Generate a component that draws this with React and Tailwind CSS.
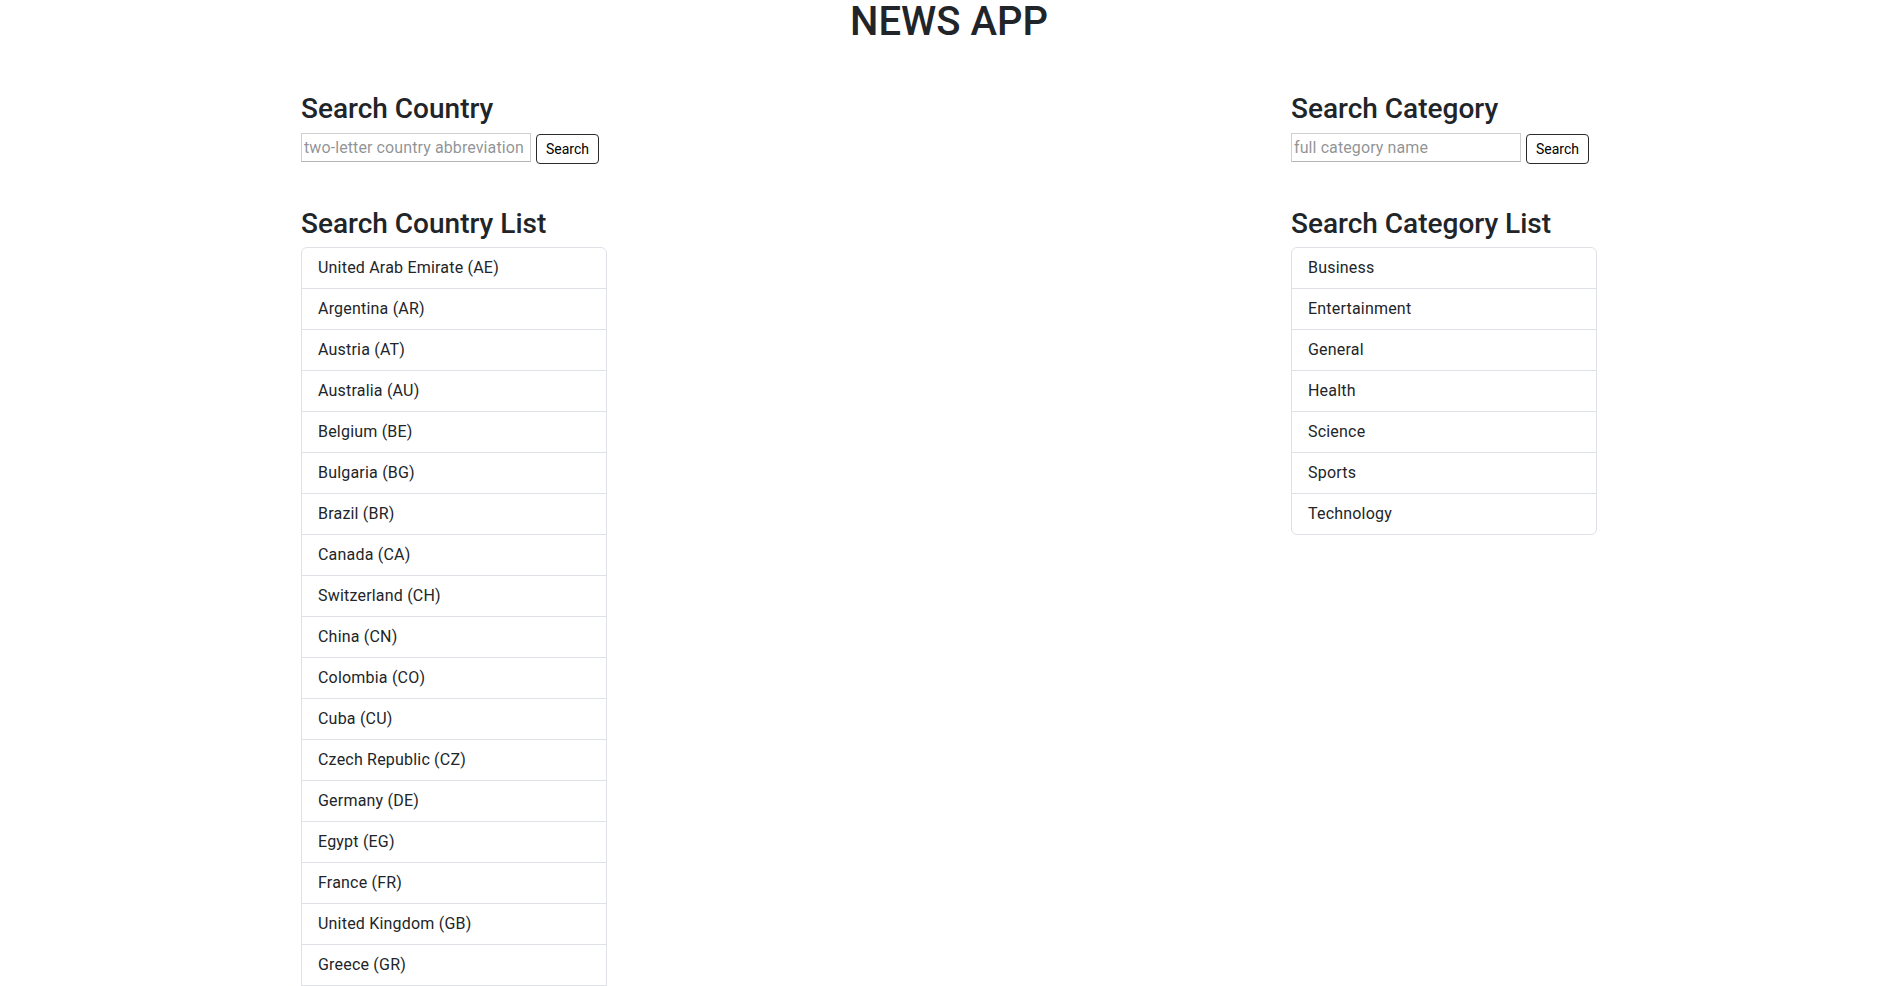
import React from "react";

const countries = [
  ["United Arab Emirate", "AE"],
  ["Argentina", "AR"],
  ["Austria", "AT"],
  ["Australia", "AU"],
  ["Belgium", "BE"],
  ["Bulgaria", "BG"],
  ["Brazil", "BR"],
  ["Canada", "CA"],
  ["Switzerland", "CH"],
  ["China", "CN"],
  ["Colombia", "CO"],
  ["Cuba", "CU"],
  ["Czech Republic", "CZ"],
  ["Germany", "DE"],
  ["Egypt", "EG"],
  ["France", "FR"],
  ["United Kingdom", "GB"],
  ["Greece", "GR"],
  ["Hong Kong", "HK"],
  ["Hungary", "HU"],
  ["Indonesia", "ID"],
  ["Ireland", "IE"],
  ["Israel", "IL"],
  ["India", "IN"],
  ["Italy", "IT"],
  ["Japan", "JP"],
  ["South Korea", "KR"],
  ["Lithuania", "LT"],
  ["Latvia", "LV"],
  ["Morocco", "MA"],
  ["Mexico", "MX"],
  ["Malaysia", "MY"],
  ["Nigeria", "NG"],
  ["Netherlands", "NL"],
  ["Norway", "NO"],
  ["New Zealand", "NZ"],
  ["Philippines", "PH"],
  ["Poland", "PL"],
  ["Portugal", "PT"],
  ["Romania", "RO"],
  ["Serbia", "RS"],
  ["Russia", "RU"],
  ["Saudi Arabia", "SA"],
  ["Sweden", "SE"],
  ["Singapore", "SG"],
  ["Slovenia", "SI"],
  ["Slovakia", "SK"],
  ["Thailand", "TH"],
  ["Turkey", "TR"],
  ["Taiwan", "TW"],
  ["Ukraine", "UA"],
  ["United States", "US"],
  ["Venezuela", "VE"],
  ["South Africa", "ZA"],
];

const categories = [
  "Business",
  "Entertainment",
  "General",
  "Health",
  "Science",
  "Sports",
  "Technology",
];

function SearchBlock({ title, placeholder, listTitle, items }) {
  return (
    <div className="w-[306px] flex flex-col">
      <h3 className="text-[28px] leading-[34px] h-[34px] font-medium mb-[7px] whitespace-nowrap">
        {title}
      </h3>
      <div className="flex items-start">
        <input
          type="text"
          placeholder={placeholder}
          className="w-[230px] h-[29px] border border-[#d0d0d0] border-b-[#b5b5b5] px-[2px] text-[16px] leading-[24px] tracking-[0.1px] outline-none"
        />
        <button className="ml-[5px] mt-[1px] h-[30px] px-[9px] border border-[#2b2b2b] rounded-[4px] bg-white text-[14px] text-black">
          Search
        </button>
      </div>
      <h3 className="mt-[43px] text-[28px] leading-[34px] h-[34px] font-medium mb-[6px] whitespace-nowrap">
        {listTitle}
      </h3>
      <ul className="border border-[#dee2e6] rounded-[6px] bg-white">
        {items.map((it, i) => (
          <li
            key={it}
            className={
              i === 0
                ? "px-4 py-2 text-[16px] leading-6 tracking-[0.2px]"
                : "px-4 py-2 text-[16px] leading-6 tracking-[0.2px] border-t border-[#dee2e6]"
            }
          >
            {it}
          </li>
        ))}
      </ul>
    </div>
  );
}

export default function App() {
  return (
    <div
      className="min-h-screen bg-white text-[#212529]"
      style={{ fontFamily: "Roboto, 'Liberation Sans', sans-serif" }}
    >
      <h1 className="-mt-[2px] text-center text-[40px] leading-[48px] font-medium">
        NEWS APP
      </h1>
      <div className="w-[1296px] mx-auto mt-[46px] flex justify-between items-start pb-10">
        <SearchBlock
          title="Search Country"
          placeholder="two-letter country abbreviation"
          listTitle="Search Country List"
          items={countries.map(([n, c]) => `${n} (${c})`)}
        />
        <SearchBlock
          title="Search Category"
          placeholder="full category name"
          listTitle="Search Category List"
          items={categories}
        />
      </div>
    </div>
  );
}
